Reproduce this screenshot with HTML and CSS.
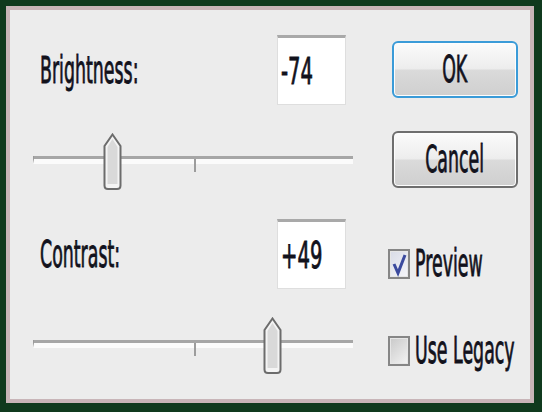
FILE: index.html
```html
<!DOCTYPE html>
<html lang="en">
<head>
  <meta charset="UTF-8" />
  <meta name="viewport" content="width=device-width, initial-scale=1" />
  <title>Brightness/Contrast</title>
  <link rel="stylesheet" href="styles.css">
</head>
<body>

  <div class="frame">
    <div class="dialog">

      <div class="main">
        <div class="field">
          <span class="label"><span class="txt">Brightness:</span></span>
          <div class="num"><span class="txt">-74</span></div>
        </div>
        <div class="slider">
          <div class="track"><span class="tick"></span></div>
          <svg class="thumb thumb-b" viewBox="0 0 19 57" width="19" height="57">
            <path d="M9.5 1.5 L17.5 13 L17.5 52.5 Q17.5 56 14 56 L5 56 Q1.5 56 1.5 52.5 L1.5 13 Z" fill="#f4f4f4" stroke="#6c6c6c" stroke-width="2"/>
            <path d="M9.5 6 L14.5 14 L14.5 51 L4.5 51 L4.5 14 Z" fill="#d9d9d9"/>
          </svg>
        </div>

        <div class="field">
          <span class="label"><span class="txt">Contrast:</span></span>
          <div class="num"><span class="txt">+49</span></div>
        </div>
        <div class="slider">
          <div class="track"><span class="tick"></span></div>
          <svg class="thumb thumb-c" viewBox="0 0 19 57" width="19" height="57">
            <path d="M9.5 1.5 L17.5 13 L17.5 52.5 Q17.5 56 14 56 L5 56 Q1.5 56 1.5 52.5 L1.5 13 Z" fill="#f4f4f4" stroke="#6c6c6c" stroke-width="2"/>
            <path d="M9.5 6 L14.5 14 L14.5 51 L4.5 51 L4.5 14 Z" fill="#d9d9d9"/>
          </svg>
        </div>
      </div>

      <div class="side">
        <button class="btn btnOk"><span class="txt">OK</span></button>
        <button class="btn btnCancel"><span class="txt">Cancel</span></button>

        <label class="check checkPreview">
          <span class="box boxOn">
            <svg viewBox="0 0 18 26" width="18" height="26">
              <polyline points="4,13 8,22 15,4" fill="none" stroke="#3b4a9e" stroke-width="3"/>
            </svg>
          </span>
          <span class="txt">Preview</span>
        </label>

        <label class="check checkLegacy">
          <span class="box"></span>
          <span class="txt">Use Legacy</span>
        </label>
      </div>

    </div>
  </div>

</body>
</html>
```

FILE: styles.css
```css
body {
  margin: 0;
  background-color: #103a1e;
  font-family: 'DejaVu Sans', sans-serif;
  font-size: 37px;
  line-height: 1;
  color: #12121c;
}
.frame {
  padding: 6px 8px 9px 6px;
}
.dialog {
  display: flex;
  height: 389px;
  overflow: hidden;
  border: 4px solid #c8b5b8;
  background-color: #ececec;
}
.txt {
  display: inline-block;
  white-space: nowrap;
  -webkit-text-stroke: 0.9px #12121c;
  transform: scaleX(0.47);
  transform-origin: left center;
}

/* left column */
.main {
  width: 320px;
  margin-left: 23px;
  padding-top: 25px;
}
.field {
  display: flex;
  align-items: center;
  justify-content: space-between;
  height: 70px;
  margin-bottom: 28px;
}
.label {
  width: 120px;
  padding-left: 7px;
}
.num {
  width: 64px;
  height: 66px;
  margin-right: 7px;
  padding-left: 3px;
  display: flex;
  align-items: center;
  overflow: hidden;
  background-color: #fff;
  border: 1px solid #dedede;
  border-top: 3px solid #a9a9a9;
}
.num .txt {
  transform: scaleX(0.53);
}
.slider {
  position: relative;
  height: 60px;
  margin-bottom: 26px;
}
.track {
  position: absolute;
  left: 0;
  right: 0;
  top: 23px;
  height: 3px;
  background-color: #a6a6a6;
  border-bottom: 5px solid #fbfbfb;
  border-left: 1px solid #9a9a9a;
}
.tick {
  position: absolute;
  left: 160px;
  top: 3px;
  width: 2px;
  height: 13px;
  background-color: #9c9c9c;
}
.thumb {
  position: absolute;
  top: 0;
}
.thumb-b {
  left: 70px;
}
.thumb-c {
  left: 230px;
}

/* right column */
.side {
  display: flex;
  flex-direction: column;
  width: 135px;
  margin-left: 35px;
  padding-top: 31px;
}
.btn {
  display: flex;
  align-items: center;
  justify-content: center;
  width: 126px;
  height: 57px;
  margin-left: 4px;
  padding: 0;
  overflow: hidden;
  font: inherit;
  color: inherit;
  border-radius: 6px;
  background: linear-gradient(#fbfbfb 0%, #ededed 48%, #dadada 52%, #cfcfcf 100%);
  box-shadow: inset 0 0 0 1px #fdfdfd;
}
.btn .txt {
  transform-origin: center center;
}
.btnOk {
  border: 2px solid #3a9bd8;
}
.btnCancel {
  margin-top: 33px;
  border: 2px solid #6e6e6e;
}
.check {
  display: flex;
  align-items: center;
  gap: 5px;
}
.checkPreview {
  margin-top: 57px;
}
.checkLegacy {
  margin-top: 50px;
}
.box {
  flex: none;
  width: 18px;
  height: 26px;
  border: 2px solid #868686;
  background: linear-gradient(135deg, #c9c9c9, #f3f3f3);
  box-shadow: inset 0 0 0 1px #e6e6e6;
}
.boxOn {
  background: linear-gradient(135deg, #d8dbe6, #f6f6fa);
}
.box svg {
  display: block;
}
```
